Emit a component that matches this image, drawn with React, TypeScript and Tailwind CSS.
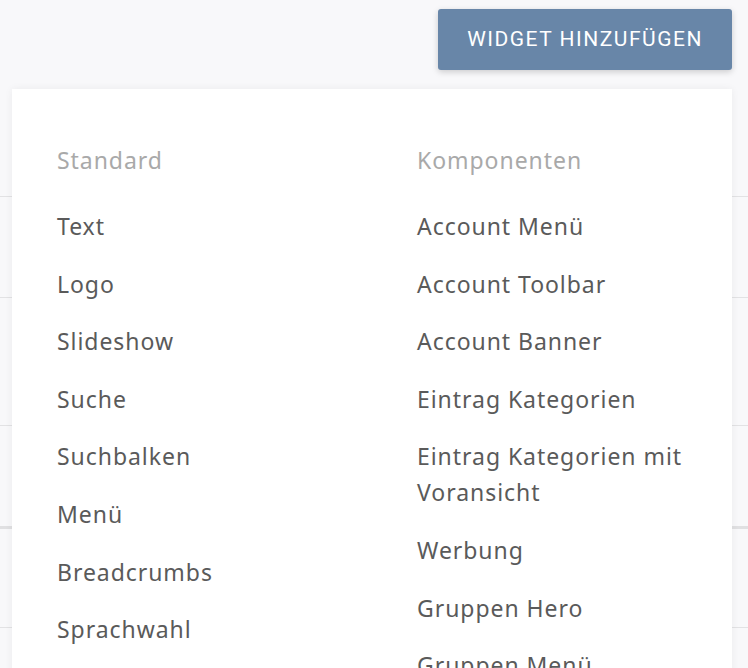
const STANDARD = ["Text", "Logo", "Slideshow", "Suche", "Suchbalken", "Menü", "Breadcrumbs", "Sprachwahl"];
const KOMPONENTEN = [
  "Account Menü",
  "Account Toolbar",
  "Account Banner",
  "Eintrag Kategorien",
  "Eintrag Kategorien mit Voransicht",
  "Werbung",
  "Gruppen Hero",
  "Gruppen Menü",
];

function Column({ title, items }: { title: string; items: string[] }) {
  return (
    <div className="flex flex-col">
      <div className="text-[23px] leading-[36px] tracking-[0.95px] text-[#a9a9a9] mb-[30px]">{title}</div>
      <div className="flex flex-col gap-[21.6px]">
        {items.map((item) => (
          <div key={item} className="text-[23px] leading-[36px] tracking-[0.95px] text-[#5a5a5a] pr-[20px]">
            {item}
          </div>
        ))}
      </div>
    </div>
  );
}

export default function App() {
  return (
    <div
      className="relative w-[748px] h-[668px] overflow-hidden bg-[#f8f8fa]"
      style={{ fontFamily: '"Noto Sans", "Open Sans", sans-serif' }}
    >
      {/* Background rows behind the dropdown */}
      <div className="pt-[196px]">
        <div className="border-t border-[#e2e2e4] h-[101px]" />
        <div className="border-t border-[#e2e2e4] h-[128px]" />
        <div className="border-t border-[#e2e2e4] h-[101px]" />
        <div className="border-t-[3px] border-[#e0e0e2] h-[101px]" />
        <div className="border-t border-[#e2e2e4] h-[101px]" />
      </div>

      {/* Add button */}
      <div className="absolute top-[9px] right-[16px]">
        <button
          className="w-[294px] h-[61px] rounded-[3px] bg-[#6886a8] text-white text-[21px] tracking-[1.5px] uppercase shadow-[0_2px_6px_rgba(0,0,0,0.18)]"
          style={{ fontFamily: "Roboto, sans-serif" }}
        >
          Widget hinzufügen
        </button>
      </div>

      {/* Dropdown panel */}
      <div className="absolute top-[89px] left-[12px] w-[720px] h-[620px] bg-white shadow-[0_0_8px_rgba(0,0,0,0.06)] pt-[53px] pl-[45px]">
        <div className="grid grid-cols-[360px_315px]">
          <Column title="Standard" items={STANDARD} />
          <Column title="Komponenten" items={KOMPONENTEN} />
        </div>
      </div>
    </div>
  );
}
